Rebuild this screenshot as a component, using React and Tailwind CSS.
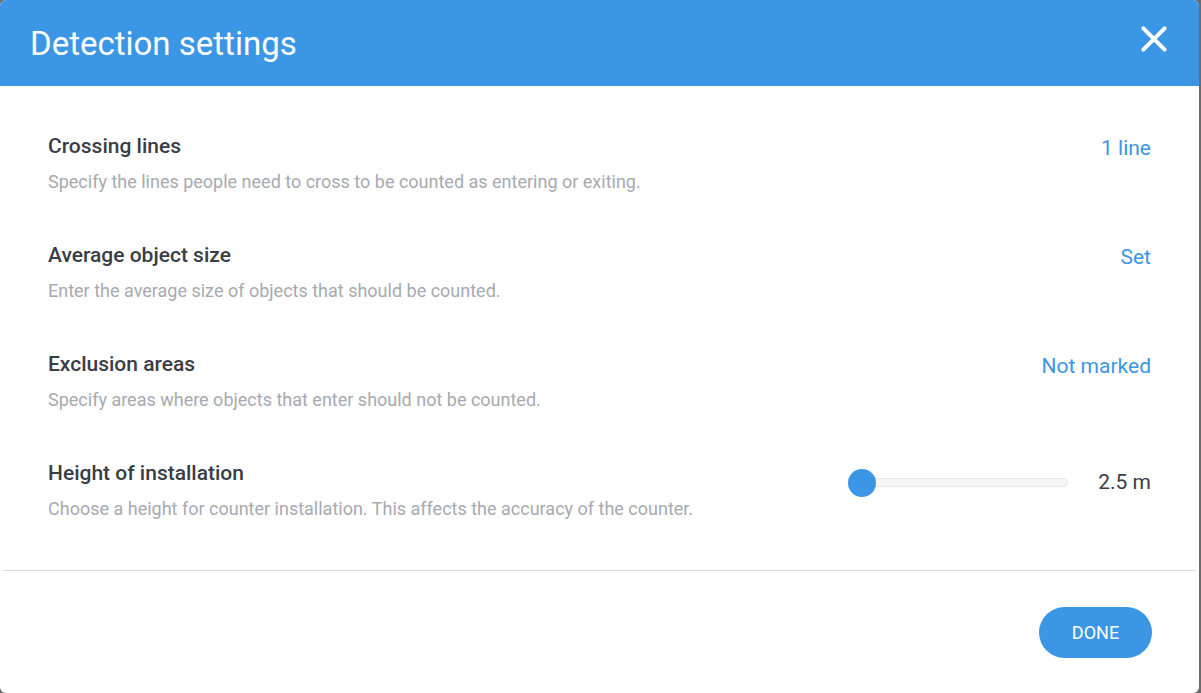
import React, { useState } from 'react';

const rows = [
  {
    title: 'Crossing lines',
    text: 'Specify the lines people need to cross to be counted as entering or exiting.',
    value: '1 line',
  },
  {
    title: 'Average object size',
    text: 'Enter the average size of objects that should be counted.',
    value: 'Set',
  },
  {
    title: 'Exclusion areas',
    text: 'Specify areas where objects that enter should not be counted.',
    value: 'Not marked',
  },
];

const SettingRow = ({ title, text, children }) => (
  <div className="flex items-start justify-between h-[109px]">
    <div>
      <h3 className="text-[21px] leading-[24px] font-medium text-[#3a3d44]">{title}</h3>
      <p className="mt-[12px] text-[18px] leading-[24px] text-[#a7aab0]">{text}</p>
    </div>
    {children}
  </div>
);

const App = () => {
  const [height] = useState(2.5);

  return (
    <div className="w-[1201px] h-[693px] bg-[#6b6b6b] font-['Roboto',sans-serif]">
      <div className="w-[1199px] h-[693px] bg-white rounded-[6px] overflow-hidden flex flex-col">
        <div className="h-[86px] bg-[#3b96e6] flex items-center justify-between pl-[30px] pr-[30px]">
          <h2 className="text-[33px] text-white pt-[2px]">Detection settings</h2>
          <button className="text-white mb-[8px]">
            <svg width="30" height="30" viewBox="0 0 24 24" fill="none" stroke="currentColor" strokeWidth="3.2" strokeLinecap="round">
              <path d="M3.5 3.5l17 17M20.5 3.5l-17 17" />
            </svg>
          </button>
        </div>

        <div className="pt-[48px] pl-[48px] pr-[48px] flex-1">
          {rows.map(r => (
            <SettingRow key={r.title} title={r.title} text={r.text}>
              <button className="text-[21px] leading-[24px] text-[#3b96e6] mt-[2px]">{r.value}</button>
            </SettingRow>
          ))}
          <SettingRow
            title="Height of installation"
            text="Choose a height for counter installation. This affects the accuracy of the counter."
          >
            <div className="flex items-center mt-[-3px] pt-[9px]">
              <div className="relative w-[220px] h-[30px] flex items-center">
                <div className="ml-[14px] w-[206px] h-[9px] rounded-full bg-[#f6f6f6] border border-[#e8e8e8]" />
                <div className="absolute left-0 top-[1px] w-[28px] h-[28px] rounded-full bg-[#3b96e6]" />
              </div>
              <span className="ml-[30px] text-[21px] text-[#3a3d44]">{height} m</span>
            </div>
          </SettingRow>
        </div>

        <div className="mx-[3px] border-t border-[#dedede]" />

        <div className="h-[122px] flex items-start justify-end pr-[47px] pt-[36px]">
          <button className="w-[113px] h-[51px] rounded-full bg-[#3b96e6] text-white text-[18px] uppercase">
            Done
          </button>
        </div>
      </div>
    </div>
  );
};

export default App;
